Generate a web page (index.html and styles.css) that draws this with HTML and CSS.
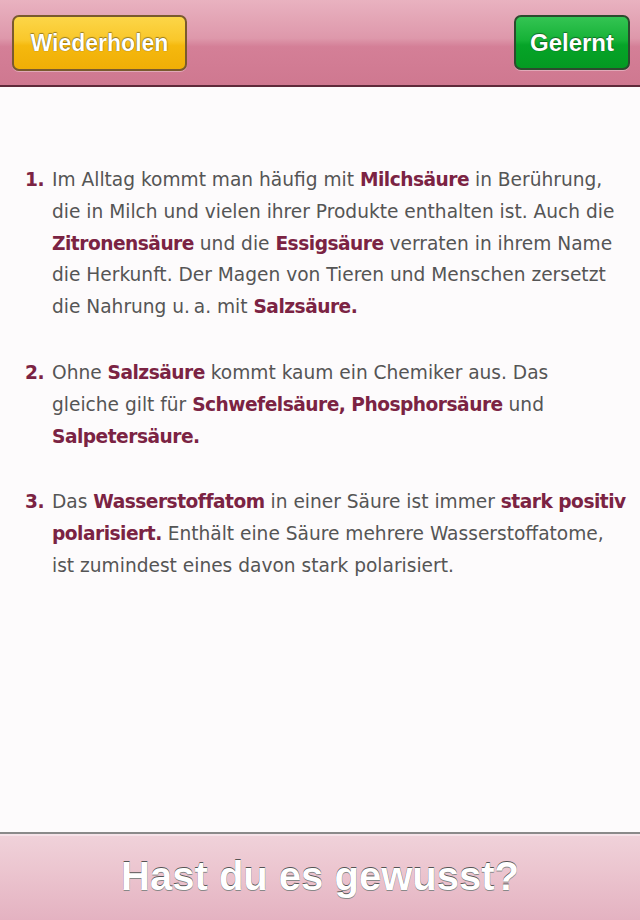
FILE: index.html
```html
<!DOCTYPE html>
<html lang="de">
<head>
<meta charset="utf-8">
<link rel="stylesheet" href="styles.css">
</head>
<body>
<div class="app">
  <header class="topbar">
    <button class="btn btn-repeat">Wiederholen</button>
    <button class="btn btn-learned">Gelernt</button>
  </header>
  <main class="content">
    <ol class="facts">
      <li><span class="num">1.</span><p>Im Alltag kommt man häufig mit <b>Milchsäure</b> in Berührung, die in Milch und vielen ihrer Produkte enthalten ist. Auch die <b>Zitronensäure</b> und die <b>Essigsäure</b> verraten in ihrem Name die Herkunft. Der Magen von Tieren und Menschen zersetzt die Nahrung u.&#8201;a. mit <b>Salzsäure.</b></p></li>
      <li><span class="num">2.</span><p>Ohne <b>Salzsäure</b> kommt kaum ein Chemiker aus. Das<br>gleiche gilt für <b>Schwefelsäure, Phosphorsäure</b> und <b>Salpetersäure.</b></p></li>
      <li><span class="num">3.</span><p>Das <b>Wasserstoffatom</b> in einer Säure ist immer <b>stark positiv polarisiert.</b> Enthält eine Säure mehrere Wasserstoffatome, ist zumindest eines davon stark polarisiert.</p></li>
    </ol>
  </main>
  <footer class="bottombar">
    <span class="question">Hast du es gewusst?</span>
  </footer>
</div>
</body>
</html>
```
FILE: styles.css
```css
html, body {
  margin: 0;
  padding: 0;
}
body {
  width: 640px;
  height: 920px;
  overflow: hidden;
  background: #fdfbfc;
}
.app {
  display: flex;
  flex-direction: column;
  height: 920px;
}
.topbar {
  height: 87px;
  flex: 0 0 87px;
  border-bottom: 2px solid #5e2a3a;
  background: linear-gradient(to bottom, #e9b2c0 0%, #de98ab 45%, #d47f97 55%, #cf7890 100%);
  display: flex;
  align-items: flex-start;
  justify-content: space-between;
  padding: 15px 10px 0 12px;
  box-sizing: border-box;
}
.btn {
  font-family: "Liberation Sans", Arial, sans-serif;
  font-weight: bold;
  color: #fff;
  border-radius: 7px;
  border: 2px solid #6b4a2a;
  height: 56px;
  padding: 0;
  cursor: pointer;
  text-shadow: 0 0 1px rgba(0,0,0,0.6), 0 -1px 1px rgba(0,0,0,0.35);
  box-shadow: 0 1px 0 rgba(255,255,255,0.35);
}
.btn-repeat {
  width: 175px;
  font-size: 23px;
  background: linear-gradient(to bottom, #fcd648 0%, #f9c72a 45%, #f5b90e 55%, #f0ae06 100%);
  border-color: #7a5a2e;
}
.btn-learned {
  width: 116px;
  height: 55px;
  font-size: 24px;
  background: linear-gradient(to bottom, #34c453 0%, #16b237 45%, #06a428 55%, #049a22 100%);
  border-color: #2d4a2e;
}
.content {
  flex: 1 1 auto;
  padding: 77px 12px 0 25px;
  box-sizing: border-box;
  font-family: "DejaVu Sans", Verdana, sans-serif;
  font-size: 18.6px;
  line-height: 31.8px;
  color: #555;
}
.facts {
  list-style: none;
  margin: 0;
  padding: 0;
}
.facts li {
  display: flex;
  margin-bottom: 34px;
}
.facts .num {
  flex: 0 0 27px;
  font-weight: bold;
  color: #7b2343;
  letter-spacing: -0.5px;
}
.facts p {
  margin: 0;
  flex: 1 1 auto;
}
.facts b {
  color: #7b2343;
  font-weight: bold;
  letter-spacing: -0.5px;
}
.bottombar {
  flex: 0 0 86px;
  height: 86px;
  border-top: 2px solid #8a8a8a;
  box-shadow: inset 0 2px 0 #f6e2e8;
  background: linear-gradient(to bottom, #f0d2da 0%, #ecc6d0 40%, #e4b2c1 100%);
  display: flex;
  align-items: center;
  justify-content: center;
}
.question {
  font-family: "Liberation Sans", Arial, sans-serif;
  font-weight: bold;
  font-size: 40px;
  color: #fff;
  text-shadow: 0 -1px 0 #555, 0 1px 0 #888;
  margin-top: -2px;
}
```
